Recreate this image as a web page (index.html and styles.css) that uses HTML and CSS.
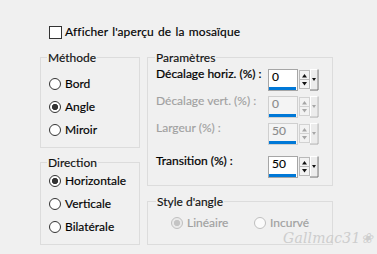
FILE: index.html
```html
<!DOCTYPE html>
<html lang="fr">
<head>
<meta charset="utf-8">
<title>Mosaïque</title>
<link rel="stylesheet" href="styles.css">
</head>
<body>
<div class="dialog">
  <div class="check-row"><span class="checkbox"></span><span class="wide">Afficher l'aperçu de la mosaïque</span></div>
  <div class="panels">
    <div class="col col-left">
      <div class="group g-methode">
        <div class="title">Méthode</div>
        <div class="opts opts-methode">
          <div class="opt"><span class="radio"></span><span>Bord</span></div>
          <div class="opt"><span class="radio checked"></span><span>Angle</span></div>
          <div class="opt"><span class="radio"></span><span>Miroir</span></div>
        </div>
      </div>
      <div class="group g-direction">
        <div class="title">Direction</div>
        <div class="opts opts-direction">
          <div class="opt"><span class="radio checked"></span><span>Horizontale</span></div>
          <div class="opt"><span class="radio"></span><span>Verticale</span></div>
          <div class="opt"><span class="radio"></span><span>Bilatérale</span></div>
        </div>
      </div>
    </div>
    <div class="col col-right">
      <div class="group g-params">
        <div class="title">Paramètres</div>
        <div class="prow first">
          <span class="plabel">Décalage horiz. (%) :</span>
          <div class="field"><span class="val">0</span><span class="uline"></span></div>
          <svg class="spin" width="20" height="22" viewBox="0 0 20 22"><rect x="0.5" y="1.5" width="10" height="9" fill="#f2f2f2" stroke="#b9b9b9"/><rect x="0.5" y="10.5" width="10" height="9" fill="#f2f2f2" stroke="#b9b9b9"/><polygon points="3,8.5 8,8.5 5.5,5" fill="#111"/><polygon points="3,13 8,13 5.5,16.5" fill="#111"/><rect x="11.5" y="0.5" width="7" height="20" fill="#ececec" stroke="#fff"/><path d="M19 0.5V21H11" fill="none" stroke="#6a6a6a"/><polygon points="13,9 17,9 15,12" fill="#111"/></svg>
        </div>
        <div class="prow dis">
          <span class="plabel">Décalage vert. (%) :</span>
          <div class="field"><span class="val">0</span><span class="uline"></span></div>
          <svg class="spin" width="20" height="22" viewBox="0 0 20 22"><rect x="0.5" y="1.5" width="10" height="9" fill="#f2f2f2" stroke="#d2d2d2"/><rect x="0.5" y="10.5" width="10" height="9" fill="#f2f2f2" stroke="#d2d2d2"/><polygon points="3,8.5 8,8.5 5.5,5" fill="#a6a6a6"/><polygon points="3,13 8,13 5.5,16.5" fill="#a6a6a6"/><rect x="11.5" y="0.5" width="7" height="20" fill="#ececec" stroke="#fff"/><path d="M19 0.5V21H11" fill="none" stroke="#a9a9a9"/><polygon points="13,9 17,9 15,12" fill="#a6a6a6"/></svg>
        </div>
        <div class="prow dis">
          <span class="plabel">Largeur (%) :</span>
          <div class="field"><span class="val">50</span><span class="uline"></span></div>
          <svg class="spin" width="20" height="22" viewBox="0 0 20 22"><rect x="0.5" y="1.5" width="10" height="9" fill="#f2f2f2" stroke="#d2d2d2"/><rect x="0.5" y="10.5" width="10" height="9" fill="#f2f2f2" stroke="#d2d2d2"/><polygon points="3,8.5 8,8.5 5.5,5" fill="#a6a6a6"/><polygon points="3,13 8,13 5.5,16.5" fill="#a6a6a6"/><rect x="11.5" y="0.5" width="7" height="20" fill="#ececec" stroke="#fff"/><path d="M19 0.5V21H11" fill="none" stroke="#a9a9a9"/><polygon points="13,9 17,9 15,12" fill="#a6a6a6"/></svg>
        </div>
        <div class="prow last">
          <span class="plabel">Transition (%) :</span>
          <div class="field"><span class="val">50</span><span class="uline"></span></div>
          <svg class="spin" width="20" height="22" viewBox="0 0 20 22"><rect x="0.5" y="1.5" width="10" height="9" fill="#f2f2f2" stroke="#b9b9b9"/><rect x="0.5" y="10.5" width="10" height="9" fill="#f2f2f2" stroke="#b9b9b9"/><polygon points="3,8.5 8,8.5 5.5,5" fill="#111"/><polygon points="3,13 8,13 5.5,16.5" fill="#111"/><rect x="11.5" y="0.5" width="7" height="20" fill="#ececec" stroke="#fff"/><path d="M19 0.5V21H11" fill="none" stroke="#6a6a6a"/><polygon points="13,9 17,9 15,12" fill="#111"/></svg>
        </div>
      </div>
      <div class="group g-style">
        <div class="title">Style d'angle</div>
        <div class="hopts">
          <div class="opt dis first"><span class="radio checked dis"></span><span>Linéaire</span></div>
          <div class="opt dis"><span class="radio dis"></span><span>Incurvé</span></div>
        </div>
      </div>
    </div>
  </div>
  <div class="wm">Gallmac31❀</div>
</div>
</body>
</html>
```
FILE: styles.css
```css
html, body {
  margin: 0;
  padding: 0;
  background: #f0f0f0;
}

.dialog {
  position: relative;
  width: 377px;
  height: 254px;
  overflow: hidden;
  background: #f0f0f0;
  font-family: Lato, "Noto Sans", sans-serif;
  font-size: 12px;
  color: #000;
  -webkit-text-stroke: 0.15px currentColor;
}

.check-row {
  display: flex;
  align-items: center;
  gap: 3px;
  height: 16px;
  line-height: 16px;
  margin: 24px 0 0 49px;
}

.wide {
  word-spacing: 1px;
  letter-spacing: 0.12px;
}

.checkbox {
  width: 13px;
  height: 13px;
  box-sizing: border-box;
  border: 1px solid #333;
  background: #fff;
}

.panels {
  display: flex;
  gap: 7px;
  margin: 17px 0 0 40px;
}

.col {
  display: flex;
  flex-direction: column;
}

.col-left {
  width: 100px;
  gap: 14px;
}

.col-right {
  width: 186px;
  gap: 15px;
}

.group {
  box-sizing: border-box;
  border: 1px solid #dcdcdc;
}

.title {
  margin: -8px 0 0 6px;
  padding: 0 1px;
  width: max-content;
  line-height: 16px;
  background: #f0f0f0;
  color: #111;
}

.g-params .title {
  margin-left: 7px;
}

.g-style .title {
  margin-left: 8px;
}

.g-methode {
  height: 91px;
}

.g-direction {
  height: 83px;
}

.g-params {
  height: 129px;
}

.g-style {
  height: 44px;
}

.opts {
  padding-left: 8px;
}

.opts-methode {
  margin-top: 6px;
}

.opts-direction {
  margin-top: -2px;
}

.opt {
  display: flex;
  align-items: center;
  gap: 4px;
  height: 23px;
  line-height: 16px;
}

.radio {
  flex: none;
  width: 12px;
  height: 12px;
  box-sizing: border-box;
  border: 1px solid #333;
  border-radius: 50%;
  background: #fff;
}

.radio.checked {
  background: radial-gradient(circle, #333 0 2.8px, #fff 3.4px);
}

.radio.dis {
  border-color: #bfbfbf;
  background: #fbfbfb;
}

.radio.checked.dis {
  background: radial-gradient(circle, #c4c4c4 0 2.8px, #e9e9e9 3.4px);
}

.dis {
  color: #a0a0a0;
}

.prow {
  display: flex;
  align-items: flex-start;
  height: 22px;
  padding-left: 8px;
  margin-top: 5px;
}

.prow.first {
  margin-top: 3px;
}

.prow.last {
  margin-top: 11px;
}

.plabel {
  width: 112px;
  margin-top: -3px;
  line-height: 16px;
  -webkit-text-stroke: 0.22px currentColor;
}

.prow.dis .plabel {
  -webkit-text-stroke: 0.12px currentColor;
}

.field {
  display: flex;
  flex-direction: column;
  width: 30px;
  height: 22px;
  box-sizing: border-box;
  border: 1px solid #a6a6a6;
  background: #fff;
}

.prow.dis .field {
  border-color: #cfcfcf;
  background: #f4f4f4;
}

.val {
  flex: 1;
  padding-left: 3px;
  line-height: 13px;
}

.prow.dis .val {
  color: #8a8a8a;
}

.uline {
  height: 3px;
  margin: 0 1px 0 0;
  background: #0078d7;
}

.spin {
  display: block;
  margin-left: 1px;
}

.hopts {
  display: flex;
  padding-left: 23px;
  margin-top: 7px;
}

.hopts .opt {
  height: 12px;
}

.hopts .opt.first {
  width: 83px;
}

.wm {
  position: absolute;
  left: 283px;
  top: 229px;
  font-family: "DejaVu Serif", serif;
  font-style: italic;
  font-size: 14px;
  line-height: 18px;
  color: #cdcdcd;
  letter-spacing: 0.2px;
  -webkit-text-stroke: 0;
}
```
